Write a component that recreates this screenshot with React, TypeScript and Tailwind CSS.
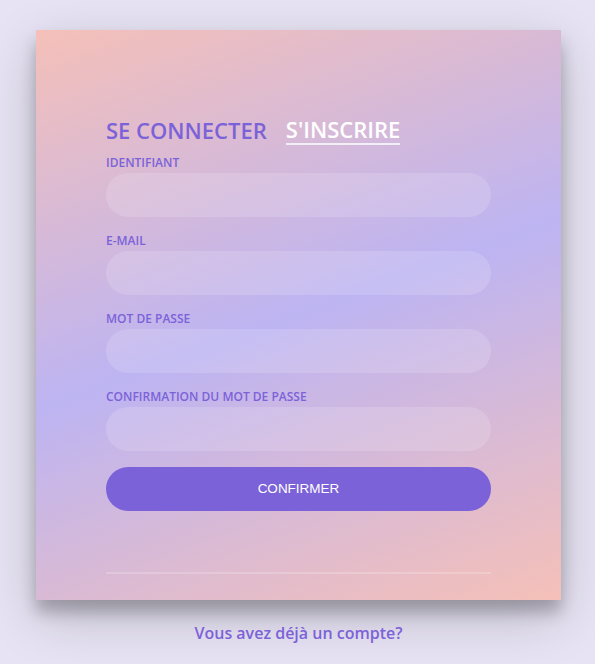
const fields = ["IDENTIFIANT", "E-MAIL", "MOT DE PASSE", "CONFIRMATION DU MOT DE PASSE"];

export default function App() {
    return (
        <div className="min-h-screen w-full bg-[#e7e3f4] pt-[30px] font-['Open_Sans',sans-serif]">
            <div className="ml-[36px] h-[570px] w-[525px] bg-[linear-gradient(160deg,#f5c0b8_0%,#bdb4f2_50%,#f5c0b8_100%)] px-[70px] pt-[85px] shadow-[0_12px_15px_rgba(0,0,0,0.24),0_17px_50px_rgba(0,0,0,0.19)]">
                <div className="flex flex-row items-start gap-[19px] text-[22px] font-semibold leading-[30px]">
                    <span className="text-[#7b62d8]">SE CONNECTER</span>
                    <span className="border-b-2 border-[#f1eef6] leading-[28px] text-white">S'INSCRIRE</span>
                </div>

                <div className="mt-[10px] flex flex-col">
                    {fields.map((f, i) => (
                        <div key={f} className={i === 0 ? "" : "mt-[16px]"}>
                            <div className="text-[12px] font-semibold leading-[16px] text-[#7b62d8]">{f}</div>
                            <input className="mt-[2px] block h-[44px] w-full rounded-full bg-white/15 px-5 outline-none" />
                        </div>
                    ))}
                </div>

                <button className="mt-[16px] h-[44px] w-full rounded-full bg-[#7b62d8] font-['Liberation_Sans',Arial,sans-serif] text-[13.5px] text-white">
                    CONFIRMER
                </button>

                <div className="mt-[61px] h-[2px] w-full bg-white/20" />
            </div>

            <div className="mt-[22px] pl-[2px] text-center text-[16px] font-semibold leading-[22px] text-[#7b62d8]">
                Vous avez déjà un compte?
            </div>
        </div>
    )
}
